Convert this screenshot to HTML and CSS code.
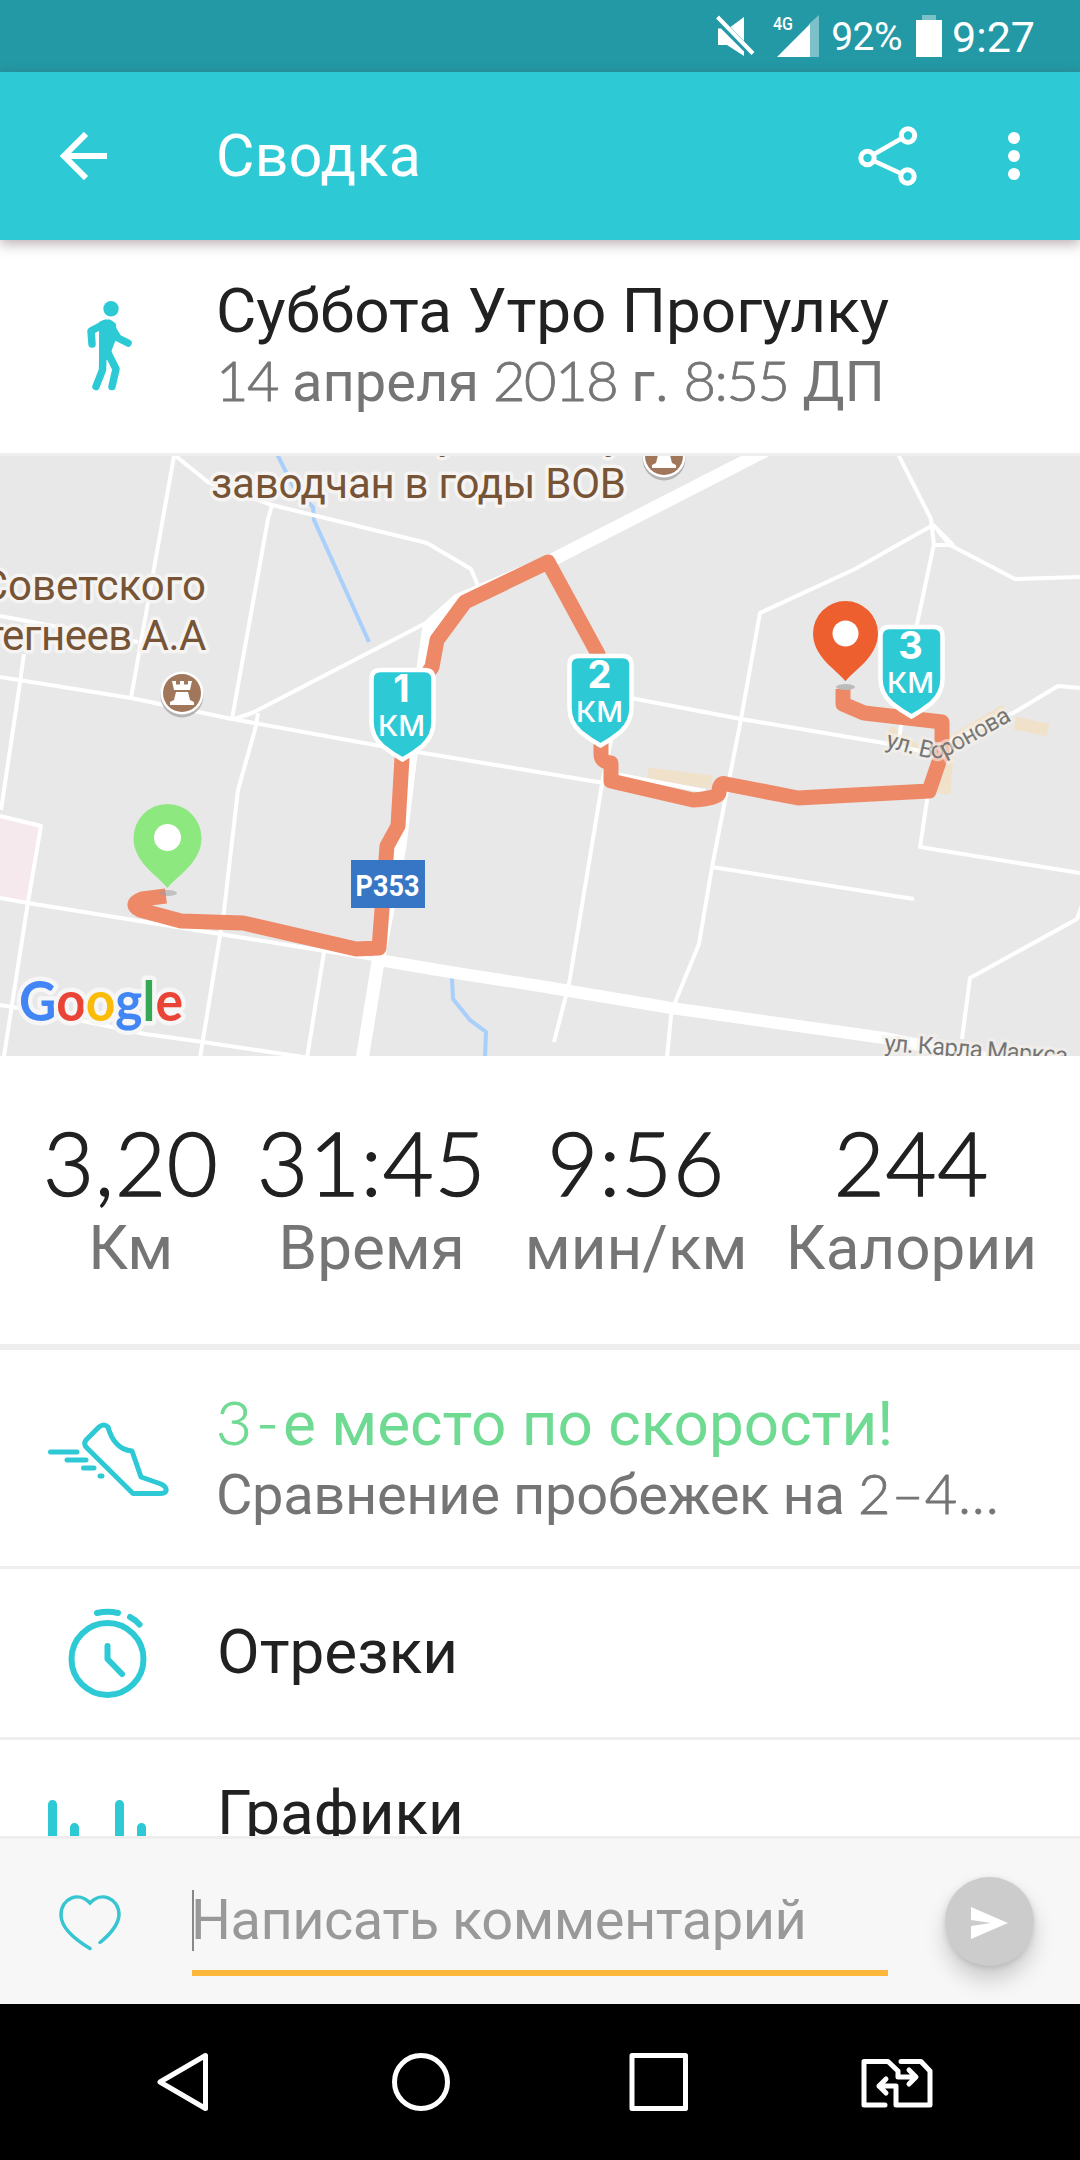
FILE: index.html
```html
<!DOCTYPE html>
<html lang="ru">
<head>
    <meta charset="UTF-8">
    <meta name="viewport" content="width=device-width, initial-scale=1.0">
    <title>Сводка</title>
    <link rel="stylesheet" href="styles.css">
</head>
<body>
    <div class="screen">
        <div class="status-bar">
            <svg class="mute-icon" width="39" height="42" viewBox="0 0 39 42">
                <path d="M2 13.500V30H11L28 41V36.500L5 13.500ZM14.500 12L28 2V26Z" fill="#fff"/>
                <path d="M1.500 2L37 38.500" stroke="#fff" stroke-width="4"/>
            </svg>
            <svg class="signal-icon" width="46" height="42" viewBox="0 0 46 42">
                <path d="M46 0V42H36V9Z" fill="#7cc1c9"/>
                <path d="M4 42H37V9Z" fill="#fff"/>
                <text class="net-type" x="0" y="15" textLength="20" lengthAdjust="spacingAndGlyphs">4G</text>
            </svg>
            <span class="battery-text">92%</span>
            <svg class="battery-icon" width="26" height="42" viewBox="0 0 26 42">
                <path d="M6 0h14v5H6z" fill="#7cc1c9"/>
                <path d="M0 5h26v37H0z" fill="#fff"/>
            </svg>
            <span class="clock">9:27</span>
        </div>

        <div class="app-bar">
            <svg class="back-icon" width="48" height="48" viewBox="0 0 48 48">
                <path d="M47 24H4M26 2L4 24L26 46" fill="none" stroke="#fff" stroke-width="6"/>
            </svg>
            <div class="app-title">Сводка</div>
            <svg class="share-icon" width="60" height="60" viewBox="0 0 60 60">
                <g fill="none" stroke="#fff" stroke-width="5">
                    <path d="M15.500 28.500L43.500 12.500M16 35L43 47.500" stroke-width="4.500"/>
                    <circle cx="9.500" cy="32" r="6.700"/>
                    <circle cx="50" cy="9.500" r="6.700"/>
                    <circle cx="49.500" cy="50.500" r="6.700"/>
                </g>
            </svg>
            <svg class="more-icon" width="12" height="48" viewBox="0 0 12 48">
                <g fill="#fff"><circle cx="6" cy="6" r="6"/><circle cx="6" cy="24" r="6"/><circle cx="6" cy="42" r="6"/></g>
            </svg>
        </div>

        <div class="content">
            <div class="summary">
                <svg class="walk-icon" width="46" height="90" viewBox="0 0 46 90">
                    <g fill="none" stroke="#2dcad6" stroke-width="7.500" stroke-linecap="round" stroke-linejoin="round">
                        <path d="M5 43L4 30L18 22.500"/>
                        <path d="M22 22.500L31 37L41 42"/>
                        <path d="M16 50L15.500 69L9 85.500"/>
                        <path d="M19 48L29 68L25 85.500"/>
                    </g>
                    <path d="M12 21Q22 15 29 23L30 36L25.500 47L22 58L12 62Z" fill="#2dcad6"/>
                    <circle cx="24" cy="7.700" r="7.700" fill="#2dcad6"/>
                </svg>
                <div class="summary-text">
                    <div class="title">Суббота Утро Прогулку</div>
                    <div class="subtitle date"><span class="num">14</span> апреля <span class="num">2018</span> г. <span class="num">8:55</span> ДП</div>
                </div>
            </div>

            <svg class="map" width="1080" height="600" viewBox="0 0 1080 600">
                <defs>
                    <path id="badge" d="M-22 2H22Q31 2 31 11V54Q31 68 20 78Q10 86 0 91.500Q-10 86 -20 78Q-31 68 -31 54V11Q-31 2 -22 2Z"/>
                    <path id="pin" d="M0 50C-8 39 -34 25 -34 0A34 34 0 0 1 34 0C34 25 8 39 0 50Z"/>
                    <g id="fort">
                        <ellipse cx="0" cy="2.500" rx="21.500" ry="22" fill="#b5b5b5"/>
                        <circle r="21.500" fill="#fff"/>
                        <circle r="19" fill="#a0775b"/>
                        <path d="M-10 -12H-6V-8.500H-2V-12H2V-8.500H6V-12H10L8 -3H-8ZM-6 -1H6L8 7L12 9V12H-12V9L-8 7Z" fill="#fff"/>
                    </g>
                    <path id="voronova" d="M885 291L924 301Q940 305 953 297L1040 249"/>
                </defs>

                <path d="M0 360L41 370L28 446L0 441Z" fill="#f5e9ed"/>

                <!-- rivers -->
                <g class="river">
                    <path d="M277 -2L293 30L313 51L314 64L369 186"/>
                    <path d="M452 522L453 543L470 564L486 576L485 602"/>
                </g>

                <g class="built-up">
                    <path d="M648 318L712 326"/>
                    <path d="M888 275L916 295"/>
                    <path d="M946 289L1006 254"/>
                    <path d="M1015 267L1048 274"/>
                    <path d="M947 297L944 338"/>
                </g>

                <!-- streets -->
                <g class="street">
                    <path d="M174 0L131 242"/>
                    <path d="M172 -3L208 26L272 49L427 87L471 113L479 132"/>
                    <path d="M272 49L268 63L232 263"/>
                    <path d="M0 221L131 242L232 263L375 289L604 327"/>
                    <path d="M234 263L252 257L424 168"/>
                    <path d="M258 257L256 270L238 334L224 455L200 602"/>
                    <path d="M24 198L17 247L1 354"/>
                    <path d="M0 160L138 186"/>
                    <path d="M0 360L41 370L28 446L4 600"/>
                    <path d="M0 442L28 447L220 478L380 504"/>
                    <path d="M0 549L30 554L145 578L203 586L310 602"/>
                    <path d="M324 496L307 602"/>
                    <path d="M898 -2L931 63L934 89L953 89L933 69L855 113L760 157L741 263L712 411L699 488L676 544L671 560L667 602"/>
                    <path d="M938 75L950 89L1015 123L1080 121"/>
                    <path d="M934 88L917 168L898 290"/>
                    <path d="M930 325L920 391L1080 417"/>
                    <path d="M620 240L741 263L884 287L925 296L1015 256L1058 230L1080 232"/>
                    <path d="M612 280L602 328L569 528L554 586"/>
                    <path d="M615 318L705 335"/>
                    <path d="M712 411L914 443"/>
                    <path d="M1082 449L1077 463L970 522L962 583"/>
                </g>
                <path class="highway" d="M361 610L379 500L400 390L412 290L429 170L458 144L548 106L765 -5"/>
                <path class="highway marx" d="M379 504L450 516L540 530L671 552L884 582L985 602"/>

                <text class="street-name" x="884" y="595" transform="rotate(4 884 595)" textLength="184">ул. Карла Маркса</text>

                <!-- route -->
                <path class="route" d="M166 440L142 443Q129 448 140 454L181 465L243 467L356 493L379 492L387 390L398 370L402 302L405 250L432 211L437 184L465 146L548 106L598 198L601 240V298Q601 306 611 307V325L693 344Q720 342 719 336Q719 326 726 328L798 342L929 335L942 297V266L864 257L843 248V233"/>

                <text class="street-name"><textPath href="#voronova" textLength="138">ул. Воронова</textPath></text>

                <!-- places -->
                <g class="place">
                    <text x="448" y="-8" text-anchor="middle">у</text>
                    <text x="614" y="-8" text-anchor="middle">у</text>
                    <text x="211" y="42" textLength="415">заводчан в годы ВОВ</text>
                    <text x="206" y="144" text-anchor="end">Советского</text>
                    <text class="narrow" x="206" y="194" text-anchor="end">тегнеев А.А</text>
                </g>
                <use href="#fort" x="182" y="237"/>
                <use href="#fort" x="664" y="0"/>

                <rect x="351" y="404" width="74" height="48" fill="#3775c5"/>
                <text class="road-no" x="387.500" y="440" textLength="64" lengthAdjust="spacingAndGlyphs">Р353</text>

                <!-- start and finish -->
                <ellipse cx="168" cy="437" rx="9" ry="3" fill="#999" opacity=".5"/>
                <use href="#pin" x="167.500" y="382" fill="#8de97f"/>
                <circle cx="167.500" cy="381.500" r="13.500" fill="#fff"/>
                <ellipse cx="845.500" cy="231" rx="9.500" ry="3" fill="#bbb"/>
                <use href="#pin" transform="translate(845.500 177.500) scale(.955)" fill="#ed5f2f"/>
                <circle cx="845.500" cy="177.500" r="13" fill="#fff"/>

                <g class="km" transform="translate(402.500 212)">
                    <use href="#badge"/>
                    <text class="km-no" x="-1" y="34">1</text>
                    <text class="km-unit" x="-1" y="68" textLength="47" lengthAdjust="spacingAndGlyphs">КМ</text>
                </g>
                <g class="km" transform="translate(600.500 198)">
                    <use href="#badge"/>
                    <text class="km-no" x="-1" y="34">2</text>
                    <text class="km-unit" x="-1" y="68" textLength="47" lengthAdjust="spacingAndGlyphs">КМ</text>
                </g>
                <g class="km" transform="translate(911.500 169)">
                    <use href="#badge"/>
                    <text class="km-no" x="-1" y="34">3</text>
                    <text class="km-unit" x="-1" y="68" textLength="47" lengthAdjust="spacingAndGlyphs">КМ</text>
                </g>

                <text class="google" x="19" y="564.500" textLength="164" lengthAdjust="spacingAndGlyphs"><tspan fill="#4285f4">G</tspan><tspan fill="#e94435">o</tspan><tspan fill="#fbbc05">o</tspan><tspan fill="#4285f4">g</tspan><tspan fill="#34a853">l</tspan><tspan fill="#e94435">e</tspan></text>
            </svg>

            <div class="stats">
                <div class="stat"><div class="value">3,20</div><div class="label">Км</div></div>
                <div class="stat"><div class="value">31:45</div><div class="label">Время</div></div>
                <div class="stat"><div class="value">9:56</div><div class="label">мин/км</div></div>
                <div class="stat"><div class="value">244</div><div class="label">Калории</div></div>
            </div>

            <div class="row row-place">
                <svg class="shoe-icon" width="122" height="74" viewBox="0 0 122 74">
                    <g fill="none" stroke="#2dcad6" stroke-width="5" stroke-linecap="round" stroke-linejoin="round">
                        <path d="M38 18L51 5Q56 1 60 5C63 16 70 28 84 29L93 55L113 62Q119 65 118 69Q117 71.500 112 71.500H85L39 26Q35 22 38 18Z"/>
                        <path d="M2.500 30H29M19 38H38M35.500 46H46M52 54H54"/>
                    </g>
                </svg>
                <div class="row-text">
                    <div class="title green"><span class="num">3-</span>е место по скорости!</div>
                    <div class="subtitle compare">Сравнение пробежек на <span class="num">2–4...</span></div>
                </div>
            </div>
            <div class="row row-splits">
                <svg class="clock-icon" width="80" height="94" viewBox="0 0 80 94">
                    <g fill="none" stroke="#2dcad6" stroke-width="6" stroke-linecap="round" stroke-linejoin="round">
                        <circle cx="39.500" cy="53" r="36"/>
                        <path d="M39.500 40V53L54 68"/>
                        <path d="M29 7Q39.500 4.500 50 7M62 11Q67 13.500 71.500 18.500"/>
                    </g>
                </svg>
                <div class="title">Отрезки</div>
            </div>
            <div class="row row-charts">
                <svg class="chart-icon" width="100" height="80" viewBox="0 0 100 80">
                    <path d="M4.500 4.500V80M26.500 27.500V80M71.500 4.500V80M93.500 27.500V80" stroke="#2dcad6" stroke-width="9" stroke-linecap="round"/>
                </svg>
                <div class="title">Графики</div>
            </div>
        </div>

        <div class="comment-bar">
            <svg class="heart-icon" width="62" height="58" viewBox="0 0 62 58">
                <path d="M31 53.500Q2 36 2 20C2 3 20 -4 31 8C42 -4 60 3 60 20Q59 33 41 47.500" fill="none" stroke="#37c6d1" stroke-width="3.500" stroke-linecap="round"/>
            </svg>
            <div class="comment-field">
                <div class="caret"></div>
                <div class="hint">Написать комментарий</div>
            </div>
            <div class="send-btn">
                <svg width="38" height="34" viewBox="0 0 38 34"><path d="M0 1L37 17L0 33V20L20 17L0 14Z" fill="#fff"/></svg>
            </div>
        </div>

        <div class="nav-bar">
            <svg width="60" height="60" viewBox="0 0 60 60"><path d="M52.500 3.500V56.500L7 30Z"/></svg>
            <svg width="60" height="60" viewBox="0 0 60 60"><ellipse cx="30" cy="30" rx="26.500" ry="26.500"/></svg>
            <svg width="60" height="60" viewBox="0 0 60 60"><path d="M3 3.500H56.500V56.500H3Z"/></svg>
            <svg width="74" height="60" viewBox="0 0 74 60">
                <path d="M25 53H4V9.500H28L38 19V25H55M49 18L56 25L49 32M41 9.500H61L70 19V53H36V34H19M26 27L19 34L26 41"/>
            </svg>
        </div>
    </div>
</body>
</html>
```

FILE: styles.css
```css
body {
    margin: 0;
    background-color: #fff;
    font-family: Roboto, 'Noto Sans', sans-serif;
    color: #212121;
}

.screen {
    width: 1080px;
    height: 2160px;
    display: flex;
    flex-direction: column;
    overflow: hidden;
}

/* status bar */
.status-bar {
    height: 72px;
    flex: none;
    background-color: #2499a6;
    color: #fff;
    display: flex;
    justify-content: flex-end;
    align-items: center;
    box-sizing: border-box;
    padding-right: 45px;
}

.mute-icon {
    margin-right: 18px;
}

.net-type {
    font-size: 19px;
    font-weight: 500;
    fill: #fff;
}

.battery-text {
    font-size: 39px;
    margin: 2px 14px 0 12px;
    letter-spacing: -0.5px;
}

.clock {
    font-size: 43px;
    margin: 2px 0 0 10px;
}

/* toolbar */
.app-bar {
    height: 168px;
    flex: none;
    background-color: #2dcad6;
    color: #fff;
    display: flex;
    align-items: center;
    box-sizing: border-box;
    padding: 0 60px;
    box-shadow: 0 4px 12px rgba(60, 30, 40, 0.35);
    z-index: 2;
}

.app-title {
    flex: 1;
    font-size: 59px;
    letter-spacing: 0.3px;
    padding-left: 108px;
    padding-bottom: 1px;
}

.share-icon {
    margin-right: 90px;
}

.content {
    height: 1596px;
    flex: none;
    overflow: hidden;
}

.title {
    font-size: 62px;
    line-height: 72px;
    white-space: nowrap;
}

.subtitle {
    font-size: 56px;
    line-height: 70px;
    color: #757575;
    white-space: nowrap;
}

.num {
    font-family: Lato, sans-serif;
    font-weight: 300;
    line-height: 1;
    -webkit-text-stroke: 0.8px currentColor;
}

.date .num {
    letter-spacing: -1.4px;
}

.green {
    color: #6fda92;
}

.green .num {
    letter-spacing: 4px;
}

.compare {
    letter-spacing: -0.35px;
}

.compare .num {
    letter-spacing: 0.8px;
}

.summary {
    height: 213px;
    display: flex;
    border-bottom: 3px solid #eee;
}

.walk-icon {
    margin: 61px 83px 0 87px;
}

.summary-text {
    padding-top: 35px;
}

/* map */
.map {
    display: block;
    background-color: #e8e8e8;
}

.street {
    fill: none;
    stroke: #fff;
    stroke-width: 4;
    stroke-linejoin: round;
}

.highway {
    fill: none;
    stroke: #fff;
    stroke-width: 13;
}

.marx {
    stroke-width: 12;
}

.river {
    fill: none;
    stroke: #a9cffb;
    stroke-width: 4;
}

.built-up {
    fill: none;
    stroke: #f0e2ca;
    stroke-width: 13;
}

.route {
    fill: none;
    stroke: #ee8968;
    stroke-width: 15;
    stroke-linejoin: round;
}

.street-name {
    font-size: 24px;
    fill: #757575;
    stroke: #f4f0ea;
    stroke-opacity: 0.6;
    stroke-width: 6;
    paint-order: stroke;
}

.place {
    font-size: 42px;
    fill: #775436;
    stroke: #f6f4f2;
    stroke-width: 7;
    stroke-linejoin: round;
    paint-order: stroke;
}

.narrow {
    letter-spacing: -0.5px;
}

.road-no {
    font-size: 29px;
    font-weight: 700;
    fill: #fff;
    text-anchor: middle;
}

.km {
    fill: #2dcad6;
    stroke: #fff;
    stroke-width: 4.5;
    text-anchor: middle;
}

.km text {
    font-family: Inter, sans-serif;
    fill: #fff;
    stroke: none;
}

.km-no {
    font-size: 38px;
    font-weight: 700;
}

.km-unit {
    font-size: 29px;
    font-weight: 500;
}

.google {
    font-family: Lato, sans-serif;
    font-size: 55px;
    font-weight: 700;
    stroke: #f6f6f6;
    stroke-width: 9;
    stroke-linejoin: round;
    paint-order: stroke;
}

/* stats */
.stats {
    height: 294px;
    box-sizing: border-box;
    padding: 61px 43px 0;
    display: flex;
    justify-content: space-between;
    border-bottom: 6px solid #eee;
}

.stat {
    text-align: center;
}

.value {
    font-family: Lato, sans-serif;
    font-weight: 300;
    font-size: 88px;
    line-height: 96px;
    margin-top: -3px;
    letter-spacing: 0.8px;
    -webkit-text-stroke: 1.4px currentColor;
}

.label {
    font-size: 62px;
    line-height: 76px;
    color: #757575;
}

/* list */
.row {
    display: flex;
    box-sizing: border-box;
    border-bottom: 3px solid #eee;
}

.row-place {
    height: 219px;
}

.shoe-icon {
    margin: 72px 46px 0 48px;
}

.row-text {
    padding-top: 38px;
}

.row-splits {
    height: 171px;
}

.clock-icon {
    margin: 37px 69px 0 68px;
}

.row-splits .title {
    margin-top: 47px;
}

.row-charts {
    height: 171px;
}

.chart-icon {
    margin: 60px 69px 0 48px;
}

.row-charts .title {
    margin-top: 37px;
}

/* comment */
.comment-bar {
    height: 168px;
    flex: none;
    box-sizing: border-box;
    border-top: 3px solid #eee;
    background-color: #f7f7f7;
    display: flex;
}

.heart-icon {
    margin: 56px 71px 0 59px;
}

.comment-field {
    width: 696px;
    height: 137px;
    box-sizing: border-box;
    border-bottom: 6px solid #fdb73a;
    display: flex;
}

.caret {
    width: 2px;
    height: 61px;
    margin-top: 51px;
    background-color: #888;
}

.hint {
    font-size: 56px;
    line-height: 70px;
    margin-top: 46px;
    margin-left: -3px;
    letter-spacing: -0.5px;
    color: #999;
    white-space: nowrap;
}

.send-btn {
    width: 89px;
    height: 89px;
    margin: 38px 0 0 57px;
    border-radius: 50%;
    background-color: #ccc;
    box-shadow: 0 14px 22px rgba(0, 0, 0, 0.18), 0 2px 6px rgba(0, 0, 0, 0.12);
    display: flex;
    align-items: center;
    justify-content: center;
}

.send-btn svg {
    margin-top: 2px;
}

/* navigation */
.nav-bar {
    height: 156px;
    flex: none;
    box-sizing: border-box;
    padding: 0 64px;
    background-color: #000;
    display: grid;
    grid-template-columns: repeat(4, 238px);
    align-items: center;
    justify-items: center;
}

.nav-bar svg {
    fill: none;
    stroke: #fff;
    stroke-width: 5;
    stroke-linejoin: round;
    stroke-linecap: round;
}
```
